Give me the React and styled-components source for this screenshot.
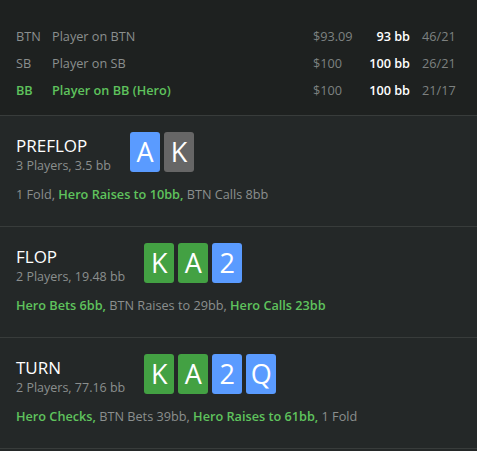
import React from "react";
import styled, { createGlobalStyle } from "styled-components";

const Global = createGlobalStyle`
  html, body { margin: 0; padding: 0; background: #242828; }
  body { font-family: "Open Sans", "Noto Sans", sans-serif; -webkit-font-smoothing: antialiased; }
`;

const Page = styled.div`
  width: 477px;
  min-height: 451px;
  background: #242828;
`;

const PlayersPanel = styled.div`
  background: #1e2120;
  padding: 23px 16px 11px;
  border-bottom: 1px solid #383c3b;
`;

const PlayerRow = styled.div`
  display: grid;
  grid-template-columns: 36px 1fr 50px 47px 51px;
  height: 27px;
  line-height: 27px;
  font-size: 12.7px;
  color: ${(p) => (p.$hero ? "#5fc35d" : "#8b8f8e")};
  font-weight: ${(p) => (p.$hero ? 600 : 400)};
`;

const Money = styled.span`
  color: #7d8180;
  font-weight: 400;
`;

const Stack = styled.span`
  color: #ffffff;
  font-weight: 600;
  text-align: right;
  white-space: nowrap;
`;

const Ratio = styled.span`
  color: #7d8180;
  font-weight: 400;
  padding-left: 12px;
`;

const Section = styled.section`
  padding: 16px 16px 23px;
  border-bottom: 1px solid #383c3b;
`;

const Header = styled.div`
  display: flex;
  align-items: flex-start;
  gap: 19px;
`;

const Titles = styled.div`
  padding-top: 3px;
`;

const Title = styled.div`
  font-size: 17px;
  line-height: 22px;
  color: #ffffff;
`;

const Sub = styled.div`
  font-size: 12.5px;
  line-height: 18px;
  color: #8b8f8e;
  white-space: nowrap;
`;

const Cards = styled.div`
  display: flex;
  gap: 4px;
`;

const colors = { green: "#43a143", blue: "#5a9bff", grey: "#666666" };

const Card = styled.div`
  width: 30px;
  height: 40px;
  border-radius: 3px;
  background: ${(p) => colors[p.$c]};
  color: #ffffff;
  font-size: 27px;
  font-weight: 400;
  line-height: 40px;
  text-align: center;
`;

const Actions = styled.div`
  margin-top: 10px;
  font-size: 12.7px;
  line-height: 18px;
  color: #8b8f8e;
  white-space: nowrap;
`;

const Hero = styled.span`
  color: #5fc35d;
  font-weight: 600;
`;

const players = [
  { pos: "BTN", name: "Player on BTN", money: "$93.09", stack: "93 bb", ratio: "46/21" },
  { pos: "SB", name: "Player on SB", money: "$100", stack: "100 bb", ratio: "26/21" },
  { pos: "BB", name: "Player on BB (Hero)", money: "$100", stack: "100 bb", ratio: "21/17", hero: true },
];

const streets = [
  {
    title: "PREFLOP",
    sub: "3 Players, 3.5 bb",
    cards: [["A", "blue"], ["K", "grey"]],
    actions: [["1 Fold, ", false], ["Hero Raises to 10bb, ", true], ["BTN Calls 8bb", false]],
  },
  {
    title: "FLOP",
    sub: "2 Players, 19.48 bb",
    cards: [["K", "green"], ["A", "green"], ["2", "blue"]],
    actions: [["Hero Bets 6bb, ", true], ["BTN Raises to 29bb, ", false], ["Hero Calls 23bb", true]],
  },
  {
    title: "TURN",
    sub: "2 Players, 77.16 bb",
    cards: [["K", "green"], ["A", "green"], ["2", "blue"], ["Q", "blue"]],
    actions: [["Hero Checks, ", true], ["BTN Bets 39bb, ", false], ["Hero Raises to 61bb, ", true], ["1 Fold", false]],
  },
];

export default function App() {
  return (
    <Page>
      <Global />
      <PlayersPanel>
        {players.map((p) => (
          <PlayerRow key={p.pos} $hero={p.hero}>
            <span>{p.pos}</span>
            <span>{p.name}</span>
            <Money>{p.money}</Money>
            <Stack>{p.stack}</Stack>
            <Ratio>{p.ratio}</Ratio>
          </PlayerRow>
        ))}
      </PlayersPanel>
      {streets.map((s) => (
        <Section key={s.title}>
          <Header>
            <Titles>
              <Title>{s.title}</Title>
              <Sub>{s.sub}</Sub>
            </Titles>
            <Cards>
              {s.cards.map(([r, c], i) => (
                <Card key={i} $c={c}>{r}</Card>
              ))}
            </Cards>
          </Header>
          <Actions>
            {s.actions.map(([t, h], i) => (h ? <Hero key={i}>{t}</Hero> : <span key={i}>{t}</span>))}
          </Actions>
        </Section>
      ))}
    </Page>
  );
}
